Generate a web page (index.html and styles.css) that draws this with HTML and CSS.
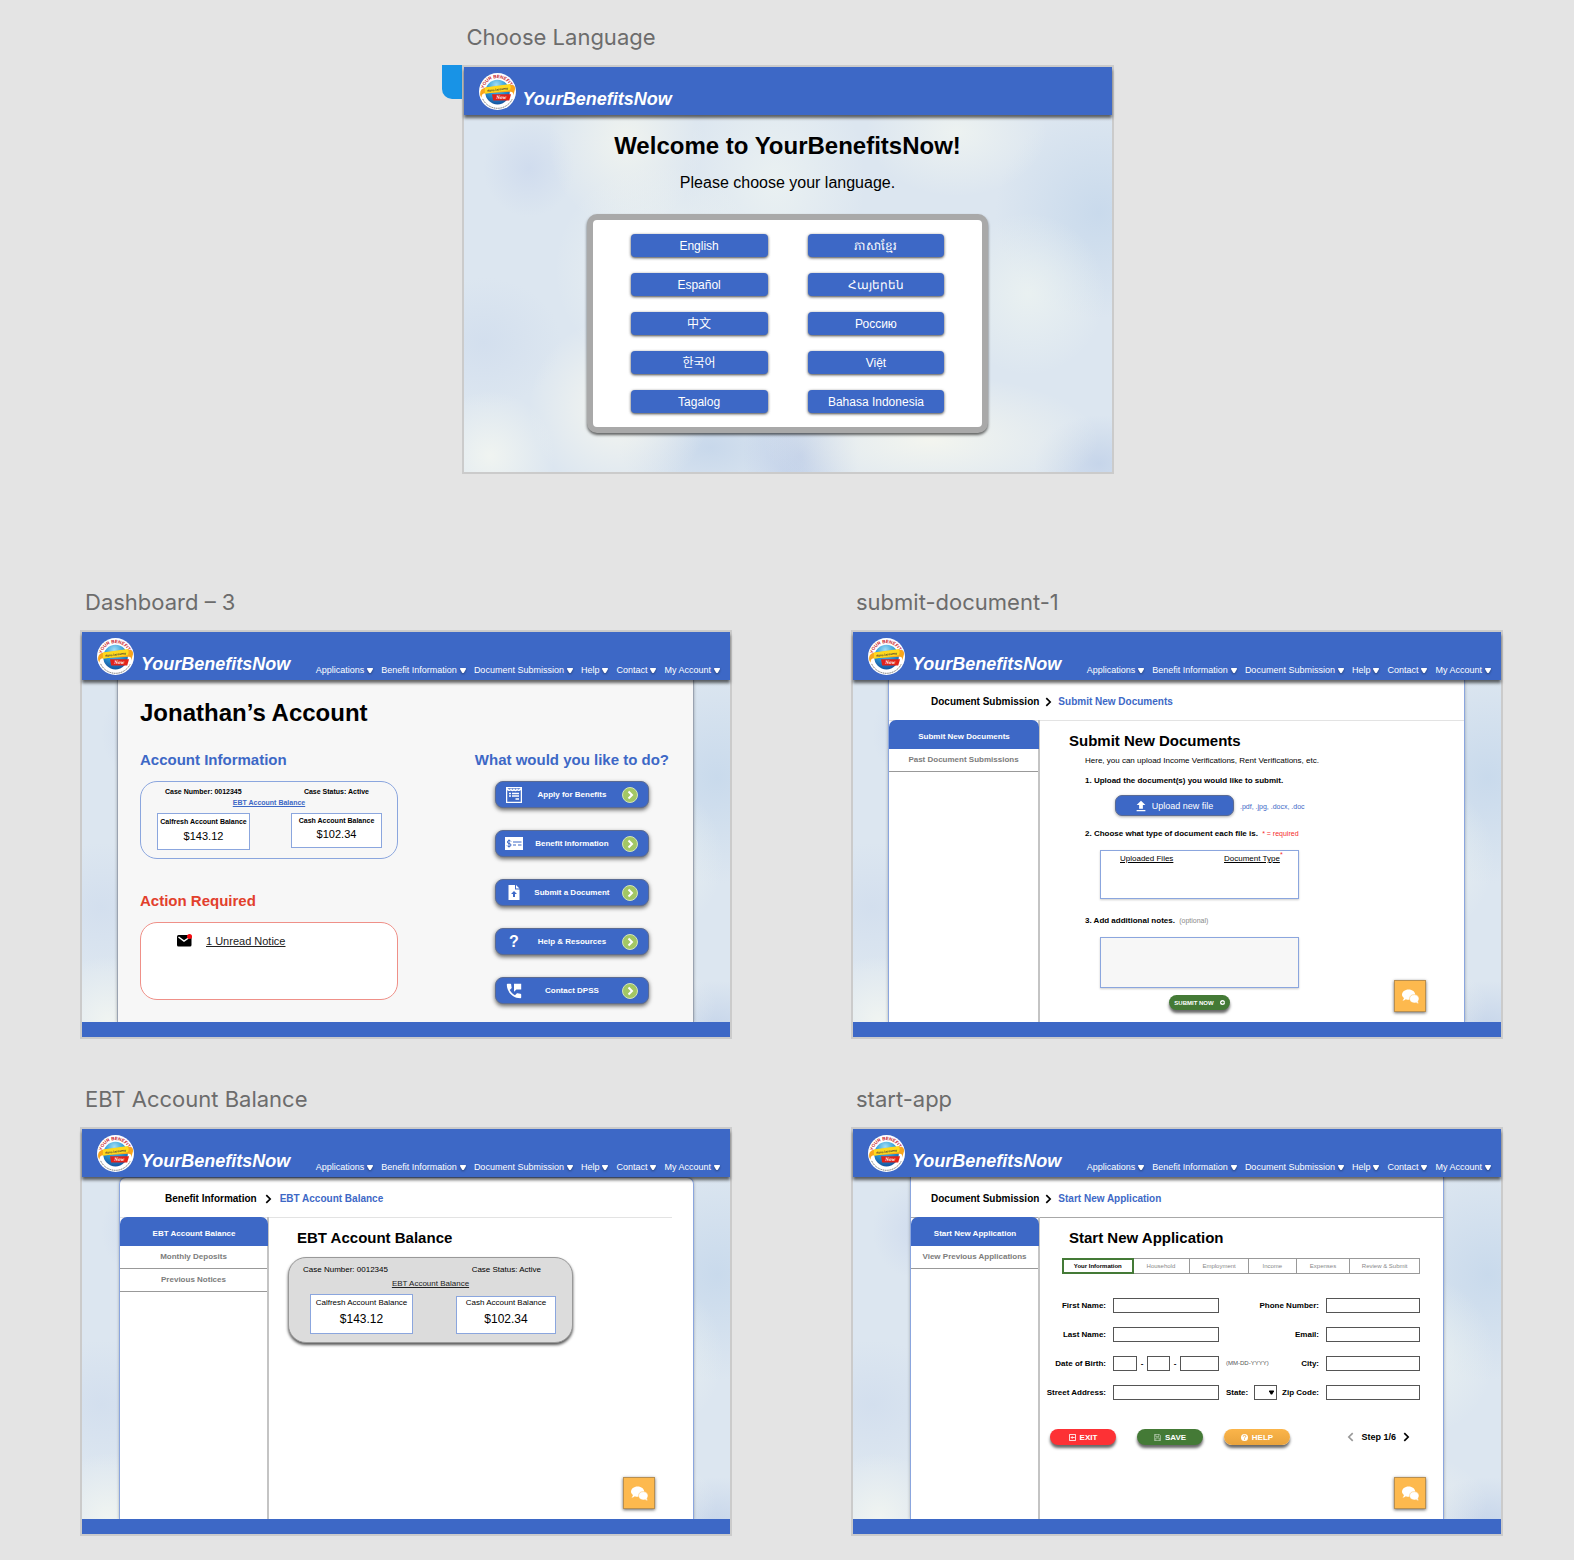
FILE: index.html
```html
<!DOCTYPE html>
<html lang="en">
<head>
<meta charset="utf-8">
<title>YourBenefitsNow – screens</title>
<meta name="viewport" content="width=device-width, initial-scale=1">
<link rel="stylesheet" href="styles.css">
</head>
<body>
<svg class="sprite" aria-hidden="true">
  <symbol id="caret" viewBox="0 0 12 10">
    <path d="M1 0h10q1 0 1 2L8 9q-2 2-4 0L0 2q0-2 1-2z" fill="currentColor"/>
  </symbol>
  <symbol id="chev" viewBox="0 0 12 18">
    <path d="M2 2l7 7-7 7" fill="none" stroke="currentColor" stroke-width="3"/>
  </symbol>
  <symbol id="go" viewBox="0 0 32 32">
    <circle cx="16" cy="16" r="15" fill="#a3c764" stroke="#d3e4b8" stroke-width="2"/>
    <path d="M13 9l7 7-7 7" fill="none" stroke="#fff" stroke-width="4"/>
  </symbol>
  <symbol id="apply" viewBox="0 0 32 32">
    <path d="M1 1h30v30H1z" fill="none" stroke="#fff" stroke-width="3"/>
    <path d="M2 3q4 6 8 2 3 4 6 0 3 4 6 0 4 4 8-2" fill="none" stroke="#fff" stroke-width="3"/>
    <path d="M6 13h4M12 13h14M6 18h4M12 18h14M19 24h7" stroke="#fff" stroke-width="3"/>
  </symbol>
  <symbol id="check" viewBox="0 0 36 26">
    <path d="M0 0h36v26H0z" fill="#fff"/>
    <path d="M16 10h17M16 16h6M26 16h7" stroke="#3d68c6" stroke-width="2"/>
    <path d="M12 9q-1-2-4-2-3 0-3 3t3 3q4 0 4 3t-4 3q-3 0-4-2M8 5v16" fill="none" stroke="#3d68c6" stroke-width="2"/>
  </symbol>
  <symbol id="doc" viewBox="0 0 24 30">
    <path d="M1 0h13v9h9v21H1zM16 0l7 7h-7z" fill="#fff"/>
    <path d="M12 12l6 6h-4v6h-4v-6H6z" fill="#3d68c6"/>
  </symbol>
  <symbol id="phone" viewBox="2 2 20 20">
    <path d="M20 15.500c-1.250 0-2.450-.2-3.570-.57-.35-.11-.74-.03-1.020.24l-2.200 2.200c-2.830-1.440-5.150-3.750-6.590-6.580l2.200-2.210c.28-.27.36-.66.25-1.010C8.700 6.450 8.500 5.250 8.500 4c0-.55-.45-1-1-1H4c-.55 0-1 .45-1 1 0 9.390 7.610 17 17 17 .55 0 1-.45 1-1v-3.500c0-.55-.45-1-1-1zM12 3v10l3-3h6V3h-9z" fill="#fff"/>
  </symbol>
  <symbol id="upload" viewBox="4 2 16 19">
    <path d="M9 16h6v-6h4l-7-7-7 7h4zM5 18h14v2H5z" fill="#fff"/>
  </symbol>
  <symbol id="mail" viewBox="0 0 30 26">
    <rect y="2" width="29" height="23" rx="3"/>
    <path d="M3 6l11 8 9-6" fill="none" stroke="#fff" stroke-width="3"/>
    <circle cx="25" cy="5" r="5" fill="#f8090f"/>
  </symbol>
  <symbol id="chat" viewBox="0 0 36 30">
    <path d="M14 0c8 0 14 5 14 11s-6 11-14 11c-2 0-4 0-6-1-2 2-4 3-7 3 1-2 3-4 3-6-3-2-4-4-4-7C0 5 6 0 14 0z" fill="#fff"/>
    <path d="M26 11c6 0 10 4 10 9 0 2-1 4-2 5 0 2 1 4 2 5-3 0-5-1-6-2-8 2-14-2-14-8s4-9 10-9z" fill="#fff" stroke="#fdb94e" stroke-width="1"/>
  </symbol>
  <symbol id="exit" viewBox="0 0 16 16">
    <path d="M1 1h14v14H1zM5 8h8M8 5L5 8l3 3" fill="none" stroke="#fff" stroke-width="2"/>
  </symbol>
  <symbol id="save" viewBox="0 0 16 16">
    <path d="M1 1h11l3 3v11H1zM4 1v5h7V1M4 15V9h8v6" fill="none" stroke="#fff" stroke-width="1"/>
  </symbol>
  <symbol id="help" viewBox="0 0 16 16">
    <circle cx="8" cy="8" r="8" fill="#fff"/>
    <path d="M5 6q0-3 3-3t3 3q0 1-3 3v1M8 11v2" fill="none" stroke="#eda53d" stroke-width="2"/>
  </symbol>
  <symbol id="plus" viewBox="0 0 16 16">
    <circle cx="8" cy="8" r="8" fill="#fff"/>
    <path d="M4 8h7M8 4l4 4-4 4" fill="none" stroke="#447a36" stroke-width="3"/>
  </symbol>
</svg>

<main class="canvas">
  <section class="artboard artboard-first">
    <h2 class="artboard-name">Choose Language</h2>
    <div class="frame">
      <span class="home-tab"></span>
      <div class="screen">
        <header class="topbar">
          <svg class="logo" viewBox="0 0 120 120">
            <defs>
              <radialGradient id="globe" cx="0.45" cy="0.2" r="0.8">
                <stop offset="0" stop-color="#9fdcf5"/>
                <stop offset="0.5" stop-color="#2b9bd8"/>
                <stop offset="1" stop-color="#14539f"/>
              </radialGradient>
              <path id="arc" d="M15 72a46 46 0 1 1 90 0"/>
            </defs>
            <g id="logo" text-rendering="geometricPrecision">
              <circle cx="60" cy="60" r="60" fill="#fff"/>
              <circle cx="60" cy="62" r="40" fill="url(#globe)"/>
              <text font-family="Liberation Sans, sans-serif" font-weight="700" font-size="15" fill="#c8232c" text-anchor="middle"><textPath href="#arc" startOffset="50%">YOUR BENEFITS</textPath></text>
              <path d="M12 84a53 53 0 0 0 96 0" fill="none" stroke="#666" stroke-width="3" stroke-dasharray="4 2"/>
              <path d="M4 72c-2-14 4-22 16-24l80-10c12-1 18 4 17 14l-6 22c1-8-1-13-8-13l-82 5c-9 1-13 4-13 14z" fill="#f9a51b"/>
              <path d="M19 47l81-11c4 8 3 14 0 20l-81 11z" fill="#ffd91c"/>
              <text x="60" y="57" font-family="Liberation Sans, sans-serif" font-weight="700" font-size="10" fill="#333" text-anchor="middle" transform="rotate(-7 60 55)">dpss.lacounty</text>
              <path d="M42 69h62l-6 20H46z" fill="#e2231a"/>
              <text x="72" y="85" font-family="Liberation Serif, serif" font-style="italic" font-weight="700" font-size="17" fill="#fff" text-anchor="middle">Now</text>
            </g>
          </svg>
          <span class="brand">YourBenefitsNow</span>
        </header>
        <div class="welcome">
          <h1 class="title">Welcome to YourBenefitsNow!</h1>
          <p class="prompt">Please choose your language.</p>
          <div class="languages">
            <button class="language" type="button">English</button>
            <button class="language" type="button" lang="km">ភាសាខ្មែរ</button>
            <button class="language" type="button" lang="es">Español</button>
            <button class="language" type="button" lang="hy">Հայերեն</button>
            <button class="language" type="button" lang="zh">中文</button>
            <button class="language" type="button" lang="ru">Россию</button>
            <button class="language" type="button" lang="ko">한국어</button>
            <button class="language" type="button" lang="vi">Việt</button>
            <button class="language" type="button" lang="tl">Tagalog</button>
            <button class="language" type="button" lang="id">Bahasa Indonesia</button>
          </div>
        </div>
      </div>
    </div>
  </section>

  <div class="boards">
    <section class="artboard">
      <h2 class="artboard-name">Dashboard – 3</h2>
      <div class="frame">
        <div class="screen">
          <header class="topbar">
            <svg class="logo" viewBox="0 0 120 120"><use href="#logo"/></svg>
            <span class="brand">YourBenefitsNow</span>
            <nav class="menu">
              <a href="#">Applications<svg><use href="#caret"/></svg></a>
              <a href="#">Benefit Information<svg><use href="#caret"/></svg></a>
              <a href="#">Document Submission<svg><use href="#caret"/></svg></a>
              <a href="#">Help<svg><use href="#caret"/></svg></a>
              <a href="#">Contact<svg><use href="#caret"/></svg></a>
              <a href="#">My Account<svg><use href="#caret"/></svg></a>
            </nav>
          </header>
          <div class="panel dashboard">
            <h1 class="title">Jonathan’s Account</h1>
            <div class="dashboard-columns">
              <div class="dashboard-info">
                <h3 class="section-title">Account Information</h3>
                <div class="info-box">
                  <div class="case-line"><span>Case Number: 0012345</span><span>Case Status: Active</span></div>
                  <a class="ebt-link" href="#">EBT Account Balance</a>
                  <div class="balances">
                    <div class="balance balance-calfresh"><span>Calfresh Account Balance</span><span class="amount">$143.12</span></div>
                    <div class="balance balance-cash"><span>Cash Account Balance</span><span class="amount">$102.34</span></div>
                  </div>
                </div>
                <h3 class="section-title alert-title">Action Required</h3>
                <div class="alert-box">
                  <svg class="mail"><use href="#mail"/></svg>
                  <a href="#">1 Unread Notice</a>
                </div>
              </div>
              <div class="dashboard-actions">
                <h3 class="section-title">What would you like to do?</h3>
                <div class="action-list">
                  <button class="action" type="button"><span class="slot"><svg class="i-apply"><use href="#apply"/></svg></span><span class="action-text">Apply for Benefits</span><span class="slot"><svg class="i-go"><use href="#go"/></svg></span></button>
                  <button class="action" type="button"><span class="slot"><svg class="i-check"><use href="#check"/></svg></span><span class="action-text">Benefit Information</span><span class="slot"><svg class="i-go"><use href="#go"/></svg></span></button>
                  <button class="action" type="button"><span class="slot"><svg class="i-doc"><use href="#doc"/></svg></span><span class="action-text">Submit a Document</span><span class="slot"><svg class="i-go"><use href="#go"/></svg></span></button>
                  <button class="action" type="button"><span class="slot question">?</span><span class="action-text">Help &amp; Resources</span><span class="slot"><svg class="i-go"><use href="#go"/></svg></span></button>
                  <button class="action" type="button"><span class="slot"><svg class="i-phone"><use href="#phone"/></svg></span><span class="action-text">Contact DPSS</span><span class="slot"><svg class="i-go"><use href="#go"/></svg></span></button>
                </div>
              </div>
            </div>
          </div>
          <footer class="bottombar"></footer>
        </div>
      </div>
    </section>

    <section class="artboard">
      <h2 class="artboard-name">submit-document-1</h2>
      <div class="frame">
        <div class="screen">
          <header class="topbar">
            <svg class="logo" viewBox="0 0 120 120"><use href="#logo"/></svg>
            <span class="brand">YourBenefitsNow</span>
            <nav class="menu">
              <a href="#">Applications<svg><use href="#caret"/></svg></a>
              <a href="#">Benefit Information<svg><use href="#caret"/></svg></a>
              <a href="#">Document Submission<svg><use href="#caret"/></svg></a>
              <a href="#">Help<svg><use href="#caret"/></svg></a>
              <a href="#">Contact<svg><use href="#caret"/></svg></a>
              <a href="#">My Account<svg><use href="#caret"/></svg></a>
            </nav>
          </header>
          <div class="panel page page-submit">
            <div class="crumbs"><span>Document Submission</span><svg><use href="#chev"/></svg><a href="#">Submit New Documents</a></div>
            <div class="page-body">
              <nav class="side">
                <a class="side-current" href="#">Submit New Documents</a>
                <a href="#">Past Document Submissions</a>
              </nav>
              <div class="content">
                <h3 class="page-title">Submit New Documents</h3>
                <div class="steps">
                  <p class="intro">Here, you can upload Income Verifications, Rent Verifications, etc.</p>
                  <p class="step-name">1. Upload the document(s) you would like to submit.</p>
                  <div class="upload-row">
                    <button class="upload" type="button"><svg><use href="#upload"/></svg>Upload new file</button>
                    <span class="formats">.pdf, .jpg, .docx, .doc</span>
                  </div>
                  <p class="step-name">2. Choose what type of document each file is. <span class="required">* = required</span></p>
                  <table class="files">
                    <thead><tr><th scope="col"><u>Uploaded Files</u></th><th scope="col"><u>Document Type</u><sup>*</sup></th></tr></thead>
                  </table>
                  <p class="step-name step-notes"><label for="notes">3. Add additional notes.</label> <span class="optional">(optional)</span></p>
                  <textarea id="notes" class="notes"></textarea>
                  <button class="submit" type="submit">SUBMIT NOW<svg><use href="#plus"/></svg></button>
                </div>
              </div>
            </div>
          </div>
          <footer class="bottombar"></footer>
          <button class="chat" type="button" aria-label="Chat"><svg><use href="#chat"/></svg></button>
        </div>
      </div>
    </section>

    <section class="artboard">
      <h2 class="artboard-name">EBT Account Balance</h2>
      <div class="frame">
        <div class="screen">
          <header class="topbar">
            <svg class="logo" viewBox="0 0 120 120"><use href="#logo"/></svg>
            <span class="brand">YourBenefitsNow</span>
            <nav class="menu">
              <a href="#">Applications<svg><use href="#caret"/></svg></a>
              <a href="#">Benefit Information<svg><use href="#caret"/></svg></a>
              <a href="#">Document Submission<svg><use href="#caret"/></svg></a>
              <a href="#">Help<svg><use href="#caret"/></svg></a>
              <a href="#">Contact<svg><use href="#caret"/></svg></a>
              <a href="#">My Account<svg><use href="#caret"/></svg></a>
            </nav>
          </header>
          <div class="panel page page-ebt">
            <div class="crumbs"><span>Benefit Information</span><svg><use href="#chev"/></svg><a href="#">EBT Account Balance</a></div>
            <div class="page-body">
              <nav class="side">
                <a class="side-current" href="#">EBT Account Balance</a>
                <a href="#">Monthly Deposits</a>
                <a href="#">Previous Notices</a>
              </nav>
              <div class="content">
                <h3 class="page-title">EBT Account Balance</h3>
                <div class="ebt-card">
                  <div class="case-line"><span>Case Number: 0012345</span><span>Case Status: Active</span></div>
                  <a class="ebt-link" href="#">EBT Account Balance</a>
                  <div class="balances">
                    <div class="balance balance-calfresh"><span>Calfresh Account Balance</span><span class="amount">$143.12</span></div>
                    <div class="balance balance-cash"><span>Cash Account Balance</span><span class="amount">$102.34</span></div>
                  </div>
                </div>
              </div>
            </div>
          </div>
          <footer class="bottombar"></footer>
          <button class="chat" type="button" aria-label="Chat"><svg><use href="#chat"/></svg></button>
        </div>
      </div>
    </section>

    <section class="artboard">
      <h2 class="artboard-name">start-app</h2>
      <div class="frame">
        <div class="screen">
          <header class="topbar">
            <svg class="logo" viewBox="0 0 120 120"><use href="#logo"/></svg>
            <span class="brand">YourBenefitsNow</span>
            <nav class="menu">
              <a href="#">Applications<svg><use href="#caret"/></svg></a>
              <a href="#">Benefit Information<svg><use href="#caret"/></svg></a>
              <a href="#">Document Submission<svg><use href="#caret"/></svg></a>
              <a href="#">Help<svg><use href="#caret"/></svg></a>
              <a href="#">Contact<svg><use href="#caret"/></svg></a>
              <a href="#">My Account<svg><use href="#caret"/></svg></a>
            </nav>
          </header>
          <div class="panel page page-start">
            <div class="crumbs"><span>Document Submission</span><svg><use href="#chev"/></svg><a href="#">Start New Application</a></div>
            <div class="page-body">
              <nav class="side">
                <a class="side-current" href="#">Start New Application</a>
                <a href="#">View Previous Applications</a>
              </nav>
              <div class="content">
                <h3 class="page-title">Start New Application</h3>
                <ol class="stepper">
                  <li class="stepper-current">Your Information</li>
                  <li>Household</li>
                  <li>Employment</li>
                  <li>Income</li>
                  <li>Expenses</li>
                  <li>Review &amp; Submit</li>
                </ol>
                <form class="form">
                  <label for="first">First Name:</label>
                  <input id="first" type="text">
                  <div class="middle"><label for="phone-no">Phone Number:</label></div>
                  <input id="phone-no" type="tel">

                  <label for="last">Last Name:</label>
                  <input id="last" type="text">
                  <div class="middle"><label for="email">Email:</label></div>
                  <input id="email" type="email">

                  <label for="month">Date of Birth:</label>
                  <div class="date"><input id="month" type="text" aria-label="Month"><span>-</span><input type="text" aria-label="Day"><span>-</span><input class="year" type="text" aria-label="Year"></div>
                  <div class="middle"><span class="hint">(MM-DD-YYYY)</span><label for="city">City:</label></div>
                  <input id="city" type="text">

                  <label for="street">Street Address:</label>
                  <input id="street" type="text">
                  <div class="middle"><label for="state">State:</label><span class="state"><select id="state"><option></option></select><svg><use href="#caret"/></svg></span><label for="zip">Zip Code:</label></div>
                  <input id="zip" type="text">
                </form>
                <div class="controls">
                  <button class="pill pill-exit" type="button"><svg><use href="#exit"/></svg>EXIT</button>
                  <button class="pill pill-save" type="button"><svg><use href="#save"/></svg>SAVE</button>
                  <button class="pill pill-help" type="button"><svg><use href="#help"/></svg>HELP</button>
                  <div class="pager">
                    <button class="pager-prev" type="button" aria-label="Previous step"><svg><use href="#chev"/></svg></button>
                    <span>Step 1/6</span>
                    <button type="button" aria-label="Next step"><svg><use href="#chev"/></svg></button>
                  </div>
                </div>
              </div>
            </div>
          </div>
          <footer class="bottombar"></footer>
          <button class="chat" type="button" aria-label="Chat"><svg><use href="#chat"/></svg></button>
        </div>
      </div>
    </section>
  </div>
</main>
</body>
</html>
```
FILE: styles.css
```css
:root {
  --blue: #3d68c6;
  --line: #8ba6de;
  --green: #447a36;
}

* {
  box-sizing: border-box;
}

body {
  margin: 0;
  background: #e4e4e4;
  color: #000;
  font-family: "Liberation Sans", Arial, "Noto Sans CJK SC", "Noto Sans CJK KR", sans-serif;
}

h1,
h2,
h3,
p,
ol {
  margin: 0;
  padding: 0;
}

button,
input,
select,
textarea {
  margin: 0;
  padding: 0;
  font: inherit;
}

button {
  border: 0;
  cursor: pointer;
}

svg {
  display: block;
}

.sprite {
  position: absolute;
  width: 0;
  height: 0;
}

/* Canvas */
.canvas {
  padding: 23px 0 24px;
}

.artboard-first {
  width: calc(50% - 135px);
  margin: 0 0 114px calc(25% + 68px);
}

.boards {
  display: grid;
  grid-template-columns: repeat(2, minmax(0, 1fr));
  gap: 46px 119px;
  padding: 0 71px 0 80px;
}

.artboard-name {
  margin: 0 0 14px 5px;
  color: #6c6c6c;
  font: 400 22px/28px Inter, sans-serif;
}

.frame {
  position: relative;
  border: 2px solid #cbcbcb;
}

.home-tab {
  position: absolute;
  top: -2px;
  left: -22px;
  width: 20px;
  height: 34px;
  border-radius: 0 0 0 10px;
  background: #1893e6;
}

.screen {
  position: relative;
  display: flex;
  flex-direction: column;
  aspect-ratio: 8 / 5;
  background:
    radial-gradient(ellipse 12% 22% at 25% 18%, #f4f6efcc, #f4f6ef00),
    radial-gradient(ellipse 16% 26% at 30% 50%, #f0f5f1cc, #f0f5f100),
    radial-gradient(ellipse 14% 30% at 48% 28%, #edf3f2cc, #edf3f200),
    radial-gradient(ellipse 14% 16% at 76% 16%, #f1f5f1cc, #f1f5f100),
    radial-gradient(ellipse 12% 20% at 87% 56%, #ebf2f1dd, #ebf2f100),
    radial-gradient(ellipse 10% 16% at 4% 96%, #f0f4f1, #f0f4f100),
    radial-gradient(ellipse 14% 22% at 24% 84%, #f5f6f0, #f5f6f000),
    radial-gradient(ellipse 26% 16% at 72% 92%, #f3f5ef, #f3f5ef00),
    radial-gradient(ellipse 16% 26% at 98% 36%, #c9daec, #c9daec00),
    radial-gradient(ellipse 9% 18% at 52% 96%, #bdcde8, #bdcde800),
    radial-gradient(ellipse 7% 12% at 10% 25%, #d0dcee, #d0dcee00),
    radial-gradient(ellipse 12% 16% at 3% 68%, #d3dfee, #d3dfee00),
    radial-gradient(ellipse 14% 14% at 38% 94%, #c8d8eb, #c8d8eb00),
    radial-gradient(ellipse 10% 12% at 98% 98%, #c6d5ea, #c6d5ea00),
    #dce6f0;
}

/* Bars shared by every screen */
.topbar {
  position: relative;
  z-index: 1;
  display: flex;
  align-items: flex-end;
  gap: 7px;
  height: 48px;
  padding: 0 10px 5px 15px;
  background: var(--blue);
  box-shadow: 0 3px 3px #0009;
  color: #fff;
}

.logo {
  flex: none;
  width: 37px;
  height: 37px;
}

.brand {
  font: italic 700 18px/22px "Liberation Sans", Arial, sans-serif;
}

.menu {
  display: flex;
  gap: 8px;
  margin-left: auto;
  font-size: 9px;
  line-height: 10px;
  white-space: nowrap;
}

.menu a {
  display: flex;
  align-items: center;
  gap: 3px;
  color: inherit;
  text-decoration: none;
}

.menu svg {
  width: 6px;
  height: 5px;
  filter: drop-shadow(0 1px 1px #0006);
}

.bottombar {
  height: 15px;
  background: var(--blue);
}

.title {
  font-size: 24px;
  line-height: 28px;
}

/* Language chooser */
.welcome {
  display: flex;
  flex-direction: column;
  align-items: center;
  padding: 17px 0 38px;
}

.prompt {
  margin: 13px 0 21px;
  font-size: 16px;
  line-height: 20px;
}

.languages {
  display: grid;
  grid-template-columns: 1fr 1fr;
  gap: 16px 40px;
  width: 62%;
  padding: 14px 38px;
  border: 6px solid #a9a9a9;
  border-radius: 10px;
  background: #fff;
  box-shadow: 0 2px 3px #0009;
}

.language {
  height: 23px;
  border-radius: 4px;
  background: var(--blue);
  box-shadow: 0 1px 3px #000b;
  color: #fff;
  font-size: 12px;
  line-height: 24px;
}

/* White sheet below the top bar */
.panel {
  flex: 1;
  margin: 0 36px 0 35px;
  border: solid #9aa3b1;
  border-width: 0 1px;
  background: #fff;
  box-shadow: 0 0 3px #0004;
}

/* Dashboard */
.dashboard {
  padding: 19px 24px 0 22px;
  background: #f7f7f7;
}

.dashboard-columns {
  display: flex;
  justify-content: space-between;
  margin-top: 24px;
}

.dashboard-info {
  width: 258px;
}

.section-title {
  margin-bottom: 12px;
  color: var(--blue);
  font-size: 15px;
  line-height: 18px;
}

.alert-title {
  margin-top: 33px;
  color: #e2402c;
}

.info-box,
.alert-box {
  height: 78px;
  border: 1px solid var(--line);
  border-radius: 17px;
}

.info-box {
  padding-top: 5px;
  font-size: 7px;
  font-weight: 700;
  line-height: 9px;
}

.alert-box {
  display: flex;
  align-items: flex-start;
  gap: 14px;
  padding: 11px 36px;
  border-color: #ef9088;
  background: #fff;
  font-size: 11px;
  line-height: 14px;
}

.alert-box a {
  color: #222;
}

.mail {
  width: 15px;
  height: 13px;
}

.case-line,
.balances {
  display: flex;
  justify-content: space-between;
}

.info-box .case-line {
  padding: 0 28px 0 24px;
}

.ebt-link {
  display: block;
  text-align: center;
}

.info-box .ebt-link {
  margin: 2px 0 6px;
  color: var(--blue);
}

.info-box .balances {
  align-items: flex-start;
  padding: 0 15px 0 16px;
}

.balance {
  display: flex;
  flex-direction: column;
  align-items: center;
  border: 1px solid var(--line);
  background: #fff;
  white-space: nowrap;
}

.info-box .balance {
  gap: 3px;
  width: 93px;
  height: 37px;
  padding-top: 3px;
}

.info-box .balance-cash {
  gap: 2px;
  width: 91px;
  height: 35px;
  padding-top: 2px;
}

.amount {
  font-size: 11px;
  font-weight: 400;
  line-height: 14px;
}

.dashboard-actions {
  display: flex;
  flex-direction: column;
  align-items: center;
}

.action-list {
  display: grid;
  gap: 22px;
  width: 154px;
}

.action {
  display: flex;
  align-items: center;
  height: 27px;
  padding: 0 8px;
  border: 1px solid #5a6b94;
  border-radius: 8px;
  background: var(--blue);
  box-shadow: 0 2px 4px #0009;
  color: #fff;
  font-size: 8px;
  font-weight: 700;
  line-height: 10px;
}

.action-text {
  flex: 1;
  white-space: nowrap;
}

.slot {
  display: flex;
  justify-content: center;
  width: 20px;
}

.question {
  font-size: 16px;
  line-height: 18px;
}

.i-go,
.i-apply {
  width: 16px;
  height: 16px;
}

.i-check {
  width: 18px;
  height: 13px;
}

.i-doc {
  width: 12px;
  height: 15px;
}

.i-phone {
  width: 16px;
  height: 16px;
}

/* Pages with a breadcrumb and side navigation */
.page {
  display: flex;
  flex-direction: column;
  border-color: var(--line);
}

.crumbs {
  display: flex;
  align-items: center;
  gap: 6px;
  height: 41px;
  padding: 3px 0 0 42px;
  border-bottom: 1px solid #e3e3e3;
  font-size: 10px;
  font-weight: 700;
  line-height: 14px;
  white-space: nowrap;
}

.crumbs svg {
  width: 7px;
  height: 10px;
}

.crumbs a {
  color: var(--blue);
  text-decoration: none;
}

.page-body {
  display: flex;
  flex: 1;
}

.side {
  flex: none;
  width: 151px;
  margin-top: -1px;
  border-right: 2px solid #c4c4c4;
  font-size: 8px;
  font-weight: 700;
  line-height: 22px;
  text-align: center;
}

.side a {
  display: block;
  border-bottom: 1px solid #999;
  color: #7c7c7c;
  text-decoration: none;
}

.side .side-current {
  margin-right: -1px;
  padding: 6px 0 1px;
  border: 0;
  border-radius: 7px 7px 0 0;
  background: var(--blue);
  color: #fff;
}

.content {
  flex: 1;
  min-width: 0;
  padding-top: 10px;
}

.page-title {
  font-size: 15px;
  line-height: 20px;
}

.chat {
  position: absolute;
  right: 75px;
  bottom: 25px;
  display: grid;
  place-items: center;
  width: 32px;
  height: 32px;
  border: 1px solid #b98f4f;
  background: #fdb94e;
  box-shadow: 0 1px 3px #0009;
}

.chat svg {
  width: 17px;
  height: 15px;
}

/* Submit documents */
.page-submit .content {
  padding-left: 29px;
}

.steps {
  padding: 4px 0 0 16px;
  font-size: 8px;
  line-height: 12px;
}

.step-name {
  margin-top: 8px;
  font-weight: 700;
}

.upload-row {
  display: flex;
  align-items: center;
  gap: 6px;
  margin: 8px 0 12px 30px;
}

.upload {
  display: flex;
  align-items: center;
  justify-content: center;
  gap: 6px;
  width: 119px;
  height: 21px;
  border: 1px solid #5a6b94;
  border-radius: 7px;
  background: var(--blue);
  box-shadow: 0 1px 3px #0005;
  color: #fff;
  font-size: 9px;
}

.upload svg {
  width: 10px;
  height: 12px;
}

.formats {
  padding-top: 3px;
  color: var(--blue);
  font-size: 7px;
}

.required,
.optional {
  margin-left: 2px;
  font-size: 7px;
  font-weight: 400;
}

.required,
.files sup {
  color: #f52a2a;
}

.optional {
  color: #888;
}

.files,
.notes {
  display: block;
  width: 199px;
  margin: 10px 0 16px 15px;
  border: 1px solid var(--line);
  box-shadow: 0 1px 2px #0003;
}

.files {
  height: 49px;
  padding-top: 2px;
  border-spacing: 0;
}

.files th {
  width: 108px;
  padding: 0 0 0 19px;
  font-weight: 400;
  text-align: left;
  white-space: nowrap;
}

.files th + th {
  width: 88px;
  padding-left: 15px;
}

.files sup {
  font-size: 7px;
  line-height: 1px;
}

.notes {
  height: 51px;
  margin-bottom: 7px;
  background: #f7f7f7;
  resize: none;
}

.submit {
  display: flex;
  align-items: center;
  justify-content: center;
  gap: 6px;
  width: 61px;
  height: 15px;
  margin-left: 84px;
  border-radius: 8px;
  background: var(--green);
  box-shadow: 0 3px 3px #0009;
  color: #fff;
  font-size: 6px;
  font-weight: 700;
  line-height: 8px;
  white-space: nowrap;
}

.submit svg {
  width: 5px;
  height: 5px;
}

/* EBT balance */
.page-ebt {
  margin-left: 37px;
  border-top-width: 1px;
  border-radius: 7px 7px 0 0;
}

.page-ebt .crumbs {
  gap: 8px;
  height: 40px;
  margin-right: 21px;
  padding-left: 45px;
}

.page-ebt .side {
  width: 149px;
}

.page-ebt .content {
  padding-left: 19px;
}

.page-ebt .page-title {
  margin: 0 0 9px 9px;
}

.ebt-card {
  width: 285px;
  height: 86px;
  padding-top: 7px;
  border: 1px solid #999;
  border-radius: 18px;
  background: #dcdcdc;
  box-shadow: 0 2px 3px #000a;
  font-size: 8px;
  line-height: 10px;
}

.ebt-card .case-line {
  padding: 0 31px 0 14px;
}

.ebt-card .ebt-link {
  margin: 4px 0 5px;
  color: #222;
}

.ebt-card .balances {
  align-items: flex-end;
  padding: 0 16px 0 21px;
}

.ebt-card .balance {
  justify-content: flex-end;
  gap: 3px;
  width: 103px;
  height: 40px;
  padding-bottom: 6px;
}

.ebt-card .balance-cash {
  width: 100px;
  height: 38px;
}

.ebt-card .amount {
  font-size: 12px;
  line-height: 16px;
}

/* Start application */
.page-start {
  margin: 0 57px;
}

.page-start .crumbs {
  padding-left: 20px;
  border-color: #a8a8a8;
}

.page-start .side {
  width: 129px;
}

.page-start .content {
  padding: 10px 23px 0 6px;
}

.page-start .page-title {
  padding-left: 23px;
}

.stepper {
  display: grid;
  grid-template-columns: 70fr 57fr 59fr 48fr 54fr 70fr;
  height: 16px;
  margin: 10px 0 24px 16px;
  border: 1px solid #999;
  color: #888;
  font-size: 6px;
  line-height: 14px;
  list-style: none;
  text-align: center;
  white-space: nowrap;
}

.stepper li + li + li {
  border-left: 1px solid #999;
}

.stepper .stepper-current {
  margin: -1px;
  border: 2px solid var(--green);
  color: #000;
  font-weight: 700;
  line-height: 12px;
}

.form {
  display: grid;
  grid-template-columns: 60px 106fr 93px 94fr;
  gap: 14px 7px;
  align-items: center;
  font-size: 8px;
  font-weight: 700;
  line-height: 15px;
  white-space: nowrap;
}

.form > label {
  text-align: right;
}

.form input,
.form select {
  width: 100%;
  min-width: 0;
  height: 15px;
  border: 1px solid #555;
  border-radius: 0;
  background: #fff;
}

.date {
  display: grid;
  grid-template-columns: 24fr 10px 23fr 10px 39fr;
  text-align: center;
}

.middle {
  display: flex;
  justify-content: space-between;
}

.middle label:only-child {
  margin-left: auto;
}

.hint {
  color: #555;
  font-size: 6px;
  font-weight: 400;
}

.state {
  display: grid;
  align-items: center;
  justify-items: end;
  width: 23px;
}

.state select,
.state svg {
  grid-area: 1 / 1;
}

.state select {
  appearance: none;
}

.state svg {
  width: 5px;
  height: 5px;
  margin-right: 3px;
  pointer-events: none;
}

.controls {
  display: flex;
  align-items: center;
  gap: 21px;
  margin: 29px 10px 0 4px;
}

.pill {
  display: flex;
  align-items: center;
  justify-content: center;
  gap: 4px;
  width: 66px;
  height: 16px;
  border-radius: 8px;
  box-shadow: 0 3px 3px #0009;
  color: #fff;
  font-size: 8px;
  font-weight: 700;
}

.pill svg {
  width: 7px;
  height: 7px;
}

.pill-exit {
  background: #fd3135;
}

.pill-save {
  background: var(--green);
}

.pill-help {
  background: linear-gradient(#fbb54a, #e9a33c);
}

.pager {
  display: flex;
  align-items: center;
  gap: 7px;
  margin-left: auto;
  font-size: 9px;
  font-weight: 700;
  white-space: nowrap;
}

.pager button {
  background: none;
  color: #000;
}

.pager .pager-prev {
  color: #999;
}

.pager svg {
  width: 7px;
  height: 10px;
}

.pager-prev svg {
  rotate: 180deg;
}
```
